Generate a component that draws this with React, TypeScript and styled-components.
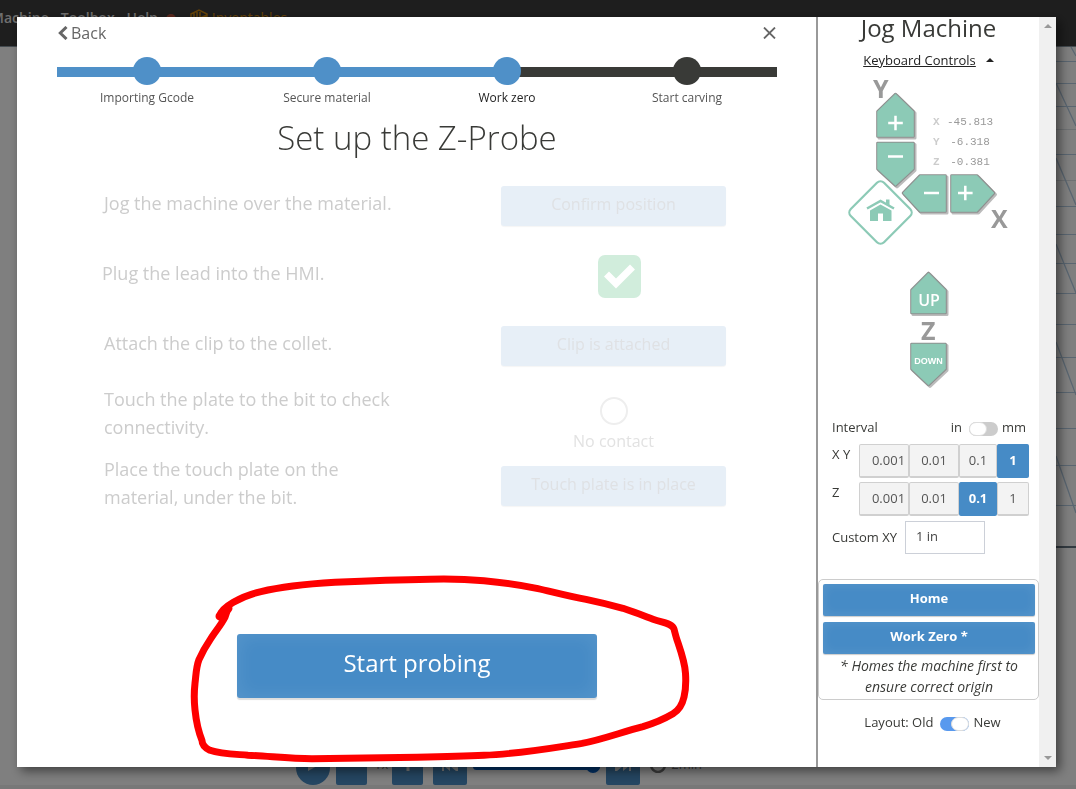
import React, { useState } from "react";
import styled, { createGlobalStyle } from "styled-components";

const GlobalStyle = createGlobalStyle`
  *, *::before, *::after { box-sizing: border-box; }
  body {
    margin: 0;
    background: #fff;
    color: #393a37;
    font-family: "Open Sans", "Noto Sans", sans-serif;
    font-size: 14px;
  }
  button, input { font-family: inherit; }
  button { cursor: pointer; }
`;

/* ---------- page behind the dialog ---------- */

const Page = styled.div`
  display: flex;
  flex-direction: column;
  height: 100vh;
  overflow: hidden;
`;

const TopBar = styled.header`
  display: flex;
  flex: none;
  height: 47px;
  padding-top: 7px;
  overflow: hidden;
  background: #3d3d3d;
  border-bottom: 1px solid #8896a0;
`;

const Menu = styled.nav`
  display: flex;
  align-items: center;
  height: 22px;
  gap: 12px;
  margin-left: -9px;
`;

const MenuLink = styled.a<{ $accent?: boolean }>`
  display: flex;
  align-items: center;
  gap: 4px;
  color: ${(p) => (p.$accent ? "#c98510" : "#dedede")};
  font-size: 14px;
  font-weight: ${(p) => (p.$accent ? 400 : 600)};
  line-height: 22px;
  text-decoration: none;
`;

const Dot = styled.span`
  width: 10px;
  height: 10px;
  margin: 2px 2px 0 -4px;
  border-radius: 50%;
  background: #b8503a;
`;

const Canvas = styled.main`
  display: flex;
  flex: 1;
  justify-content: flex-end;
  min-height: 0;
  overflow: hidden;
`;

const Player = styled.footer`
  display: flex;
  flex: none;
  align-items: center;
  height: 38px;
  padding: 0 0 8px 296px;
  border-bottom: 4px solid #f0f0f0;
`;

const PlayerButton = styled.button<{ $round?: boolean; $wide?: boolean }>`
  display: grid;
  place-items: center;
  width: ${(p) => (p.$round || p.$wide ? 34 : 31)}px;
  height: 34px;
  margin: 8px 6px 0 ${(p) => (p.$wide ? 4 : 0)}px;
  padding: 0 0 6px;
  border: 0;
  border-radius: ${(p) => (p.$round ? "50%" : "2px")};
  background: #4a8cc4;
  color: #eee;
`;

const PlayerText = styled.span`
  padding: 0 4px 0 1px;
  color: #777;
  font-size: 13px;
`;

const Scrub = styled.div`
  display: flex;
  align-items: center;
  justify-content: flex-end;
  width: 127px;
  height: 7px;
  margin: 4px 2px 0 0;
  border-radius: 4px;
  background: #0560c8;
`;

const ScrubThumb = styled.span`
  width: 14px;
  height: 14px;
  border-radius: 50%;
  background: #0560c8;
`;

/* ---------- dialog ---------- */

const Overlay = styled.div`
  position: fixed;
  inset: 0;
  display: flex;
  padding: 17px 20px 22px 17px;
  background: rgba(0, 0, 0, 0.5);
`;

const Dialog = styled.div`
  display: flex;
  flex: 1;
  min-width: 0;
  background: #fff;
  box-shadow: 4px 4px 10px rgba(0, 0, 0, 0.5);
`;

const Wizard = styled.section`
  display: flex;
  flex: 1;
  flex-direction: column;
  min-width: 0;
  padding: 4px 39px 0 40px;
`;

const WizardTop = styled.div`
  display: flex;
  align-items: center;
  justify-content: space-between;
  height: 24px;
`;

const PlainButton = styled.button`
  display: flex;
  align-items: center;
  gap: 3px;
  padding: 0;
  border: 0;
  background: none;
  color: #666;
  font-size: 16px;
  line-height: 24px;
`;

const Steps = styled.ol`
  display: grid;
  grid-template-columns: repeat(4, 1fr);
  margin: 12px 0 0;
  padding: 0;
  list-style: none;
`;

const blue = "#4f90c8";
const dark = "#393a37";

const Step = styled.li<{ $state: "done" | "current" | "todo" }>`
  display: flex;
  flex-direction: column;
  align-items: center;
  color: ${(p) => (p.$state === "current" ? "#222" : "#555")};
  font-size: 12px;
  line-height: 20px;
  background: linear-gradient(
      to right,
      ${(p) => (p.$state === "todo" ? dark : blue)} 50%,
      ${(p) => (p.$state === "done" ? blue : dark)} 50%
    )
    0 10px / 100% 10px no-repeat;

  &::before {
    content: "";
    width: 28px;
    height: 28px;
    margin-bottom: 3px;
    border-radius: 50%;
    background: ${(p) => (p.$state === "todo" ? dark : blue)};
  }
`;

const Title = styled.h1`
  margin: 8px 0 0;
  font-size: 33px;
  font-weight: 300;
  line-height: 44px;
  text-align: center;
`;

const Checklist = styled.ul`
  display: flex;
  flex-direction: column;
  margin: 11px 0 0;
  padding: 0 51px 0 47px;
  list-style: none;
`;

const CheckItem = styled.li`
  display: flex;
  align-items: center;
  justify-content: space-between;
  height: 70px;
`;

const CheckText = styled.p<{ $done?: boolean }>`
  width: 308px;
  margin: 0 0 6px ${(p) => (p.$done ? "-2px" : "0")};
  color: #ccc;
  font-size: 18px;
  line-height: 28px;
`;

const CheckSide = styled.div<{ $shift?: boolean }>`
  display: flex;
  flex-direction: column;
  align-items: center;
  width: 225px;
  padding-left: ${(p) => (p.$shift ? "12px" : "0")};
  color: #e2e2e2;
  font-size: 16px;
  line-height: 24px;
`;

const FadedButton = styled.button`
  width: 100%;
  height: 40px;
  padding: 0 0 4px;
  border: 0;
  border-radius: 3px;
  background: #e7eff7;
  box-shadow: 0 1px 1px #f6f6f6;
  color: #dfe1e4;
  font-size: 16px;
  line-height: 24px;
`;

const ContactRing = styled.span`
  width: 28px;
  height: 28px;
  margin: 17px 0 4px;
  border: 2px solid #eee;
  border-radius: 50%;
`;

const StartArea = styled.div`
  position: relative;
  align-self: center;
  margin-top: 113px;
`;

const StartButton = styled.button`
  width: 360px;
  height: 64px;
  padding: 0 0 8px;
  border: 0;
  border-radius: 3px;
  background: #468bc6;
  box-shadow: inset 0 0 20px rgba(255, 255, 255, 0.1), 0 2px 1px #ddd;
  color: #fff;
  font-size: 24px;
  font-weight: 500;
`;

const Annotation = styled.svg`
  position: absolute;
  top: -64px;
  left: -50px;
  pointer-events: none;
`;

/* ---------- jog panel ---------- */

const JogPanel = styled.aside`
  display: flex;
  flex: none;
  flex-direction: column;
  width: 223px;
  border-left: 2px solid #999;
`;

const JogTitle = styled.h2`
  margin: -7px 0 1px;
  font-size: 24px;
  font-weight: 400;
  line-height: 36px;
  text-align: center;
`;

const KeyboardRow = styled.div`
  display: flex;
  align-items: center;
  justify-content: center;
  gap: 10px;
  height: 26px;
`;

const KeyboardLink = styled.a`
  color: #222;
  font-size: 13px;
  line-height: 20px;
  text-decoration: underline;
`;

const JogPad = styled.div`
  position: relative;
  height: 344px;
`;

const JogButton = styled.button<{ $x: number; $y: number }>`
  position: absolute;
  left: ${(p) => p.$x}px;
  top: ${(p) => p.$y}px;
  padding: 0;
  border: 0;
  background: none;
  line-height: 0;
`;

const Axis = styled.span<{ $x: number; $y: number }>`
  position: absolute;
  left: ${(p) => p.$x}px;
  top: ${(p) => p.$y}px;
  color: #999;
  font-size: 25px;
  font-weight: 700;
  line-height: 26px;
`;

const Readout = styled.dl`
  position: absolute;
  left: 115px;
  top: 39px;
  display: grid;
  grid-template-columns: 14px 46px;
  margin: 0;
  color: #999;
  font-family: "Liberation Mono", monospace;
  font-size: 11px;
  line-height: 20px;

  dt { color: #ccc; font-weight: 700; }
  dd { margin: 0; text-align: center; }
`;

const Settings = styled.div`
  display: flex;
  flex-direction: column;
  padding: 0 10px 0 14px;
  font-size: 13px;
`;

const SettingHead = styled.div`
  display: flex;
  align-items: center;
  justify-content: space-between;
  height: 20px;
  padding-right: 3px;
  margin-bottom: 7px;
`;

const SwitchLabel = styled.label`
  display: flex;
  align-items: center;
  gap: 4px;
  font-size: 13px;
`;

const Switch = styled.input`
  appearance: none;
  display: flex;
  width: 29px;
  height: 14px;
  margin: 3px 0 0 3px;
  border-radius: 7px;
  background: #ccc;

  &::before {
    content: "";
    width: 18px;
    height: 14px;
    border: 1px solid #ddd;
    border-radius: 7px;
    background: #fff;
  }
  &:checked { justify-content: flex-end; background: #5899ee; }
`;

const SettingRow = styled.div`
  display: flex;
  justify-content: space-between;
  height: 38px;
  line-height: 20px;
`;

const Segments = styled.div`
  display: grid;
  grid-template-columns: 50px 50px 38px 32px;
  height: 34px;
`;

const Segment = styled.button<{ $active: boolean }>`
  padding: 0 0 2px;
  overflow: hidden;
  border: 1px solid ${(p) => (p.$active ? "#468bc6" : "#d0d0d0")};
  border-bottom-width: 2px;
  border-radius: 2px;
  background: ${(p) => (p.$active ? "#468bc6" : "#f3f3f3")};
  color: ${(p) => (p.$active ? "#fff" : "#555")};
  font-size: 13px;
  font-weight: ${(p) => (p.$active ? 700 : 400)};

  &:first-child { padding-left: 9px; }
`;

const CustomRow = styled.div`
  display: flex;
  align-items: center;
  gap: 8px;
  height: 34px;
`;

const CustomInput = styled.input`
  width: 80px;
  height: 33px;
  padding: 0 10px 2px;
  border: 1px solid #ccd0d8;
  background: #fff;
  color: #444;
  font-size: 13px;
`;

const HomeBox = styled.div`
  display: flex;
  flex-direction: column;
  gap: 6px;
  margin-top: 25px;
  padding: 4px 3px 2px 4px;
  border: 1px solid #ccc;
  border-radius: 5px;
`;

const HomeButton = styled.button`
  height: 32px;
  padding: 0 0 5px;
  border: 0;
  border-radius: 2px;
  background: #468bc6;
  box-shadow: inset 0 0 12px rgba(255, 255, 255, 0.1), 0 1px 1px #ccc;
  color: #fff;
  font-size: 13px;
  font-weight: 700;
`;

const HomeNote = styled.p`
  margin: -5px 0 0;
  font-size: 14px;
  font-style: italic;
  line-height: 21px;
  text-align: center;
`;

const LayoutRow = styled.div`
  display: flex;
  justify-content: center;
  padding: 13px 0 0 8px;
`;

const ScrollTrack = styled.div`
  display: flex;
  flex: none;
  flex-direction: column;
  align-items: center;
  justify-content: space-between;
  width: 17px;
  padding: 7px 0;
  background: #f0f0f0;
`;

/* ---------- drawings ---------- */

const mint = "#8ccab6";

function Arrow({ points, w, h, children }: { points: string; w: number; h: number; children?: React.ReactNode }) {
  return (
    <svg width={w} height={h} aria-hidden="true">
      <polygon points={points} transform="translate(1.5 1.5)" fill="#bbb" stroke="#bbb" strokeWidth="3" strokeLinejoin="round" />
      <polygon points={points} fill={mint} stroke="#8e8e8e" strokeWidth="2.6" strokeLinejoin="round" />
      <polygon points={points} fill={mint} stroke={mint} strokeWidth="0.6" strokeLinejoin="round" />
      {children}
    </svg>
  );
}

const plus = "h14.600 m-7.300 -7.300 v14.600";

function GridLines() {
  const rows = [14, 36, 59, 107, 159, 187, 216, 246, 277, 310, 345, 381, 418, 458];
  const slants = ["M15 0 20 9", "M0 36 20 79", "M0 111 20 158", "M0 197 20 246", "M0 295 20 348", "M0 409 20 466"];
  return (
    <svg width="20" height="700" fill="none" stroke="#b4cce2" aria-hidden="true">
      {rows.map((y) => (
        <path key={y} d={`M0 ${y + 0.5}H20`} />
      ))}
      <path d="M0 82.500H20M0 133.500H20" stroke="#dde2e6" />
      {slants.map((d) => (
        <path key={d} d={d} strokeWidth="1.3" />
      ))}
      <path d="M0 500H20" stroke="#33485a" strokeWidth="1.500" />
    </svg>
  );
}

function SegmentRow({ label, value }: { label: string; value: string }) {
  const [active, setActive] = useState(value);
  return (
    <SettingRow>
      <span>{label}</span>
      <Segments role="group" aria-label={`${label} interval`}>
        {["0.001", "0.01", "0.1", "1"].map((v) => (
          <Segment key={v} $active={v === active} aria-pressed={v === active} onClick={() => setActive(v)}>
            {v}
          </Segment>
        ))}
      </Segments>
    </SettingRow>
  );
}

export default function App() {
  return (
    <>
      <GlobalStyle />
      <Page>
        <TopBar>
          <Menu>
            <MenuLink href="#machine">Machine</MenuLink>
            <MenuLink href="#toolbox">Toolbox</MenuLink>
            <MenuLink href="#help">Help</MenuLink>
            <Dot />
            <MenuLink href="#inventables" $accent>
              <svg width="18" height="18" viewBox="0 0 18 18" fill="none" stroke="currentColor" strokeWidth="1.5" aria-hidden="true">
                <path d="M1 5 9 1l8 4v8l-8 4-8-4zM1 5v8M4 4v9M7 3v10l8-4M10 3v6l7-3M1 9l8 4" />
              </svg>
              Inventables
            </MenuLink>
          </Menu>
        </TopBar>
        <Canvas>
          <GridLines />
        </Canvas>
        <Player>
          <PlayerButton $round aria-label="Play">
            <svg width="12" height="14" aria-hidden="true"><path d="M1 1 12 7 1 13z" fill="currentColor" /></svg>
          </PlayerButton>
          <PlayerButton aria-label="Slower" />
          <PlayerText>1x</PlayerText>
          <PlayerButton aria-label="Faster">
            <svg width="12" height="12" aria-hidden="true"><path d="M0 6h12M6 0v12" stroke="currentColor" strokeWidth="3" /></svg>
          </PlayerButton>
          <PlayerButton $wide aria-label="Previous">
            <svg width="16" height="12" aria-hidden="true"><path d="M0 0h2v5l6-5v5l6-5h2v12h-2l-6-5v5l-6-5v5h-2z" fill="currentColor" /></svg>
          </PlayerButton>
          <Scrub><ScrubThumb /></Scrub>
          <PlayerButton $wide aria-label="Next">
            <svg width="16" height="12" aria-hidden="true"><path d="M16 0h-2v5l-6-5v5l-6-5h-2v12h2l6-5v5l6-5v5h2z" fill="currentColor" /></svg>
          </PlayerButton>
          <svg width="24" height="18" aria-hidden="true"><circle cx="12" cy="10" r="7" fill="none" stroke="#777" strokeWidth="2.5" /></svg>
          <PlayerText>2min</PlayerText>
        </Player>
      </Page>

      <Overlay>
        <Dialog role="dialog" aria-label="Set up the Z-Probe">
          <Wizard>
            <WizardTop>
              <PlainButton>
                <svg width="11" height="14" viewBox="0 0 11 14" fill="none" stroke="currentColor" strokeWidth="3" aria-hidden="true">
                  <path d="M9.500 1 3.300 7l6.200 6" />
                </svg>
                Back
              </PlainButton>
              <PlainButton aria-label="Close">
                <svg width="14" height="12" viewBox="0 0 14 12" stroke="currentColor" strokeWidth="1.800" aria-hidden="true">
                  <path d="M1 .5l11 11M12 .5l-11 11" />
                </svg>
              </PlainButton>
            </WizardTop>
            <Steps>
              <Step $state="done">Importing Gcode</Step>
              <Step $state="done">Secure material</Step>
              <Step $state="current" aria-current="step">Work zero</Step>
              <Step $state="todo">Start carving</Step>
            </Steps>
            <Title>Set up the Z-Probe</Title>
            <Checklist>
              <CheckItem>
                <CheckText>Jog the machine over the material.</CheckText>
                <CheckSide><FadedButton>Confirm position</FadedButton></CheckSide>
              </CheckItem>
              <CheckItem>
                <CheckText $done>Plug the lead into the HMI.</CheckText>
                <CheckSide $shift>
                  <svg width="43" height="43" viewBox="0 0 43 43" role="img" aria-label="Done">
                    <rect width="43" height="43" rx="7" fill="#d1eddc" />
                    <path d="M8.500 19 18 28.500 34.500 12" fill="none" stroke="#fff" strokeWidth="7" />
                  </svg>
                </CheckSide>
              </CheckItem>
              <CheckItem>
                <CheckText>Attach the clip to the collet.</CheckText>
                <CheckSide><FadedButton>Clip is attached</FadedButton></CheckSide>
              </CheckItem>
              <CheckItem>
                <CheckText>Touch the plate to the bit to check connectivity.</CheckText>
                <CheckSide><ContactRing />No contact</CheckSide>
              </CheckItem>
              <CheckItem>
                <CheckText>Place the touch plate on the material, under the bit.</CheckText>
                <CheckSide><FadedButton>Touch plate is in place</FadedButton></CheckSide>
              </CheckItem>
            </Checklist>
            <StartArea>
              <StartButton>Start probing</StartButton>
              <Annotation width="505" height="200" viewBox="187 570 505 200" fill="none" stroke="#fe0000" strokeWidth="7" strokeLinejoin="round" strokeLinecap="round" aria-hidden="true">
                <g transform="translate(0 7.840) scale(1 0.986)">
                  <path d="M220 616C222 608 240 597 261 592C285 586 310 584 335 582.500C370 581 400 580 430 579.500C450 579 467 579.500 484 581C505 583 520 585 538 589C555 593 570 597 586 600C600 603 612 606 623 609C635 613 645 617 653 620C664 624 672 624 674 630C675 634 676 638 677 641C681 653 685 664 685.500 675C686 683 686 691 684 699C682 708 678 713 673 716C663 722 653 726 643 729C623 734 603 742 582 746C550 751 517 757 484 758C462 759 440 759.500 417 760L312 761.500C290 761.500 270 759 248 758C236 757 221 757 210 753C204 750 202 747 202 743C198 733 196 722 195 712C194 703 194 694 195 685C196 677 196 669 199 661C202 654 206 647 210 641C214 634 221 626 225 618L228 609" />
                  <path d="M220 617 228 609" strokeWidth="9" />
                </g>
              </Annotation>
            </StartArea>
          </Wizard>

          <JogPanel>
            <JogTitle>Jog Machine</JogTitle>
            <KeyboardRow>
              <KeyboardLink href="#keyboard">Keyboard Controls</KeyboardLink>
              <svg width="8" height="4" aria-hidden="true"><path d="M0 4 4 0l4 4z" fill="#222" /></svg>
            </KeyboardRow>
            <JogPad>
              <Axis $x={55} $y={2}>Y</Axis>
              <Axis $x={173} $y={132}>X</Axis>
              <Axis $x={103} $y={244}>Z</Axis>
              <JogButton $x={56} $y={17} aria-label="Y plus">
                <Arrow w={44} h={50} points="21.500,4 39.500,21.500 39.500,46.500 3.500,46.500 3.500,21.500">
                  <path d={`M14.200 33${plus}`} stroke="#fff" strokeWidth="2.500" />
                </Arrow>
              </JogButton>
              <JogButton $x={56} $y={66} aria-label="Y minus">
                <Arrow w={44} h={52} points="3.500,4 39.500,4 39.500,30 21.500,46.500 3.500,30">
                  <path d="M14 17.500h15" stroke="#fff" strokeWidth="2.500" />
                </Arrow>
              </JogButton>
              <JogButton $x={82} $y={99} aria-label="X minus">
                <Arrow w={50} h={44} points="3,21 20,3.500 45.500,3.500 45.500,39.500 20,39.500">
                  <path d="M24 21h15" stroke="#fff" strokeWidth="2.500" />
                </Arrow>
              </JogButton>
              <JogButton $x={130} $y={99} aria-label="X plus">
                <Arrow w={50} h={44} points="3.500,3.500 29,3.500 46,21 29,39.500 3.500,39.500">
                  <path d={`M10 21${plus}`} stroke="#fff" strokeWidth="2.500" />
                </Arrow>
              </JogButton>
              <JogButton $x={29} $y={106} aria-label="Home">
                <svg width="67" height="67" viewBox="0 0 67 67" aria-hidden="true">
                  <rect x="10" y="10" width="47" height="47" rx="5" transform="rotate(45 33.500 33.500)" fill="#fff" stroke={mint} strokeWidth="2.200" />
                  <path d="M20 29.500 33.500 22l13.500 7.500" fill="none" stroke={mint} strokeWidth="2.500" />
                  <path d="M39 20.500h3.500v6.500l-3.500-2zM23 31.500l10.500-6L44.500 31.500v10.500H36V34.500h-5v7.500h-8z" fill={mint} />
                </svg>
              </JogButton>
              <JogButton $x={90} $y={196} aria-label="Z up">
                <Arrow w={42} h={48} points="20.500,4 37.500,21 37.500,44 3.500,44 3.500,21">
                  <text x="21" y="36.500" textAnchor="middle" fill="#fff" fontSize="16" fontWeight="600" fontFamily="Open Sans, sans-serif">UP</text>
                </Arrow>
              </JogButton>
              <JogButton $x={90} $y={267} aria-label="Z down">
                <Arrow w={42} h={50} points="3.500,4 37.500,4 37.500,29 20.500,45 3.500,29">
                  <text x="20.500" y="23.500" textAnchor="middle" fill="#fff" fontSize="9" fontWeight="700" fontFamily="Liberation Sans, sans-serif">DOWN</text>
                </Arrow>
              </JogButton>
              <Readout>
                <dt>X</dt><dd>-45.813</dd>
                <dt>Y</dt><dd>-6.318</dd>
                <dt>Z</dt><dd>-0.381</dd>
              </Readout>
            </JogPad>
            <Settings>
              <SettingHead>
                <span>Interval</span>
                <SwitchLabel>in <Switch type="checkbox" /> mm</SwitchLabel>
              </SettingHead>
              <SegmentRow label="X Y" value="1" />
              <SegmentRow label="Z" value="0.1" />
              <CustomRow>
                <label htmlFor="custom-xy">Custom XY</label>
                <CustomInput id="custom-xy" defaultValue="1 in" />
              </CustomRow>
            </Settings>
            <HomeBox>
              <HomeButton>Home</HomeButton>
              <HomeButton>Work Zero *</HomeButton>
              <HomeNote>* Homes the machine first to ensure correct origin</HomeNote>
            </HomeBox>
            <LayoutRow>
              <SwitchLabel>Layout: Old <Switch type="checkbox" defaultChecked /> New</SwitchLabel>
            </LayoutRow>
          </JogPanel>
          <ScrollTrack aria-hidden="true">
            <svg width="8" height="4"><path d="M0 4 4 0l4 4z" fill="#999" /></svg>
            <svg width="8" height="4"><path d="M0 0h8L4 4z" fill="#999" /></svg>
          </ScrollTrack>
        </Dialog>
      </Overlay>
    </>
  );
}
